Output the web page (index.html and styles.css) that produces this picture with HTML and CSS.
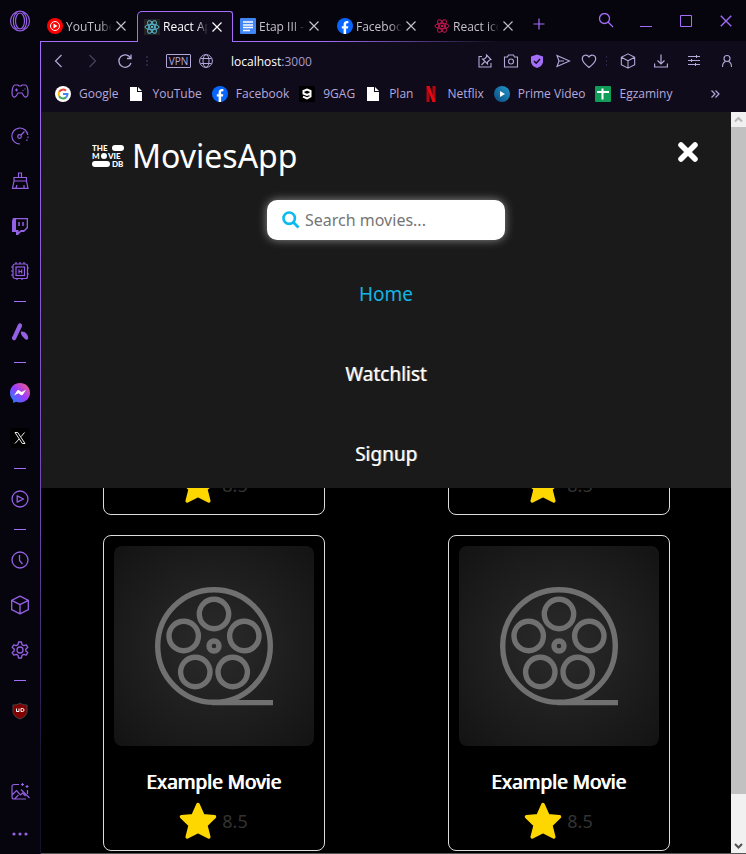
FILE: index.html
```html
<!DOCTYPE html>
<html lang="en">
<head>
<meta charset="utf-8">
<title>React App</title>
<link rel="stylesheet" href="styles.css">
</head>
<body>
<svg class="defs" aria-hidden="true">
  <defs>
    <linearGradient id="msg" x1="0" y1="1" x2="1" y2="0"><stop offset="0" stop-color="#0a8cff"/><stop offset=".5" stop-color="#9b3cff"/><stop offset="1" stop-color="#ff6070"/></linearGradient>
    <linearGradient id="prime" x1="0" y1="1" x2="1" y2="0"><stop offset="0" stop-color="#0b4a80"/><stop offset="1" stop-color="#2298cc"/></linearGradient>
    <radialGradient id="poster" r=".7"><stop offset="0" stop-color="#2b2b2b"/><stop offset="1" stop-color="#131313"/></radialGradient>
    <symbol id="atom" viewBox="0 0 16 16"><g fill="none" stroke="currentColor"><ellipse cx="8" cy="8" rx="7" ry="2.7"/><ellipse cx="8" cy="8" rx="7" ry="2.7" transform="rotate(60 8 8)"/><ellipse cx="8" cy="8" rx="7" ry="2.7" transform="rotate(120 8 8)"/></g><circle cx="8" cy="8" r="1.3" fill="currentColor"/></symbol>
    <symbol id="close" viewBox="0 0 12 12"><path d="M1.500 1.500l9 9M10.500 1.500l-9 9" fill="none" stroke="currentColor" stroke-width="1.2"/></symbol>
    <symbol id="facebook" viewBox="0 0 16 16"><circle cx="8" cy="8" r="8" fill="#0866ff"/><path d="M6.600 16V10.600H4.800V8.200h1.800V6.800c0-2.600 1.300-3.700 3.400-3.700.6 0 1 .05 1.400.15v2.100h-1c-1 0-1.300.5-1.300 1.400v1.450h2.200l-.4 2.400H9.100V16z" fill="#fff"/></symbol>
    <symbol id="file" viewBox="0 0 16 16"><path d="M2 1h7v5h5v9H2z" fill="#fff"/><path d="M10 1l4 4h-4z" fill="#fff"/></symbol>
    <symbol id="cube" viewBox="0 0 18 18"><path d="M9 1l7.500 3.800v8.400L9 17l-7.500-3.800V4.800zM1.500 4.800L9 8.700l7.500-3.900M9 8.700V17" fill="none" stroke="currentColor" stroke-linejoin="round" stroke-width="1.200"/></symbol>
    <symbol id="star" viewBox="0 0 38 38"><path d="M19 2.500l5 11.200 11.500 1.100-8.700 8.400 3 11.800L19 29.400 8.200 35l3-11.800-8.700-8.400L14 13.700z" fill="#ffd700" stroke="#ffd700" stroke-width="3.500" stroke-linejoin="round"/></symbol>
    <symbol id="reel" viewBox="0 0 200 200"><rect width="200" height="200" fill="url(#poster)"/><g fill="none" stroke="#707070" stroke-width="5.400"><circle cx="100" cy="100" r="56.300"/><circle cx="100" cy="68" r="14.700"/><circle cx="69.700" cy="90" r="14.700"/><circle cx="130.300" cy="90" r="14.700"/><circle cx="81.300" cy="126" r="14.700"/><circle cx="118.700" cy="126" r="14.700"/><circle cx="100" cy="100" r="5"/><path d="M98 156.600h61"/></g></symbol>
  </defs>
</svg>
<div class="window">
  <aside class="sidebar">
    <button class="side-item side-logo" aria-label="Opera"><svg width="22" height="22" viewBox="0 0 22 22" fill="none" stroke="currentColor" stroke-width="1.200"><ellipse cx="11" cy="11" rx="9.500" ry="9.800"/><ellipse cx="11" cy="11" rx="4.500" ry="8"/><path d="M8.500 2.500C3 5 3 17 8.500 19.500M13.500 2.500c5.500 2.500 5.500 14.500 0 17"/></svg></button>
    <button class="side-item" aria-label="GX Corner"><svg width="20" height="20" viewBox="0 0 20 20" fill="none" stroke="currentColor" stroke-width="1.200"><path d="M5 4h3l1 1h2l1-1h3c2 0 3 4 3 8.500 0 4-3 4.500-4.500 2L12 12H8l-1.500 2.500C5 17 2 16.500 2 12.500 2 8 3 4 5 4z"/><path d="M5 9h3M6.500 7.500v3M12.500 9.500h1M14.500 8h1"/></svg></button>
    <button class="side-item" aria-label="GX Control"><svg width="20" height="20" viewBox="0 0 20 20" fill="none" stroke="currentColor" stroke-width="1.200"><path d="M10 18a8 8 0 1 1 7.800-9"/><path d="M18 10.500a8 8 0 0 1-1.500 4.300" stroke-dasharray="1.500 1.500"/><circle cx="9.500" cy="10.500" r="1.800"/><path d="M11 9l3.500-3.500"/></svg></button>
    <button class="side-item" aria-label="GX Cleaner"><svg width="20" height="20" viewBox="0 0 20 20" fill="none" stroke="currentColor" stroke-width="1.200"><path d="M8.500 6V2h3v4M4 10V6.500h12.500V10M4 10h12.500l1.500 7.300H2.500zM6 17l1-3M14 17v-3"/></svg></button>
    <button class="side-item" aria-label="Twitch"><svg width="20" height="20" viewBox="0 0 20 20"><path d="M3 2h15v10l-4 4h-3l-3 3H6v-3H2V5z" fill="currentColor"/><path d="M6 3.300h10.700v8L14 14h-3l-2.500 2v-2H6z" fill="#08050f"/><path d="M9 6v4M13 6v4" stroke="currentColor" stroke-width="1.500"/></svg></button>
    <button class="side-item" aria-label="Hardware"><svg width="20" height="20" viewBox="0 0 20 20" fill="none" stroke="currentColor" stroke-width="1.200"><rect x="3" y="3" width="14.500" height="14.500" rx="2"/><rect x="6" y="6" width="8.500" height="8.500"/><path d="M6 1v2M10 1v2M14 1v2M7 17v2M12 17v2M1 6h2M1 10h2M1 14h2M17 7h2M17 13h2M9 8.500v4M11.700 8.500v4M9 10.500h2.500"/></svg></button>
    <hr class="side-rule">
    <button class="side-item" aria-label="Aria"><svg width="20" height="20" viewBox="0 0 20 20" fill="currentColor"><path d="M8 2.500C9 .8 11.500 1 12 3c.3 1-.2 2-1 3.500L6 17c-1 2-3.500 1.500-4-.5-.2-1 .3-2 1-3z"/><path d="M11 9.500c4.500-.5 7.200 3.500 7.200 6.500 0 2.500-2.700 2-4.200 0-1.500-2-3.500-3-3-6.500z"/></svg></button>
    <hr class="side-rule">
    <button class="side-item" aria-label="Messenger"><svg width="20" height="20" viewBox="0 0 20 20"><path d="M10 0C4.300 0 0 4.200 0 9.700c0 3 1.200 5.500 3 7.300L3.300 20 6 18.800c1.300.4 2.500.6 4 .6 5.700 0 10-4.200 10-9.700S15.700 0 10 0z" fill="url(#msg)"/><path d="M4 12.500l3-4.700c.5-.8 1.500-1 2.300-.4l2.300 1.700L16 6.800l-3 4.700c-.5.8-1.500 1-2.300.4L8.400 10.200z" fill="#fff"/></svg></button>
    <button class="side-item" aria-label="X"><svg width="20" height="20" viewBox="0 0 20 20" fill="none" stroke="#eee"><rect width="20" height="20" rx="4" fill="#000" stroke="none"/><path d="M5 4.500h2.700l7.300 11h-2.700zM14.500 4.500L11 8.700M9 11l-4 4.500"/></svg></button>
    <hr class="side-rule">
    <button class="side-item" aria-label="Player"><svg width="20" height="20" viewBox="0 0 20 20" fill="none" stroke="currentColor" stroke-width="1.300"><circle cx="10" cy="10" r="8"/><path d="M7.200 6.800v6.400l6.300-3.200z" stroke-linejoin="round"/></svg></button>
    <hr class="side-rule">
    <button class="side-item" aria-label="History"><svg width="20" height="20" viewBox="0 0 20 20" fill="none" stroke="currentColor" stroke-width="1.300"><circle cx="10" cy="10" r="8"/><path d="M9.500 5v5.500l3 3.500"/></svg></button>
    <button class="side-item" aria-label="Extensions"><svg width="20" height="20"><use href="#cube"/></svg></button>
    <button class="side-item" aria-label="Settings"><svg width="20" height="20" viewBox="0 0 20 20" fill="none" stroke="currentColor" stroke-width="1.300" stroke-linejoin="round"><circle cx="10" cy="10" r="3"/><path d="M8.500 2h3l.5 2.600 1.700 1L16.200 4.800l1.600 2.600-2 1.700v1.800l2 1.700-1.600 2.600-2.500-.8-1.700 1-.5 2.600h-3L8 15.400l-1.700-1-2.500.8-1.600-2.600 2-1.700V9.100l-2-1.700 1.600-2.600 2.500.8 1.700-1z"/></svg></button>
    <hr class="side-rule">
    <button class="side-item" aria-label="uBlock"><svg width="16" height="18" viewBox="0 0 16 18"><path d="M8 1c2 1.500 4 2 7 2v6c0 4-3 6.500-7 8-4-1.500-7-4-7-8V3c3 0 5-.5 7-2z" fill="#800000" stroke="#444"/><path d="M4.500 6.500v3h2.500v-3M9 6.500v3h1.500a1.500 1.500 0 0 0 0-3H9" fill="none" stroke="#fff"/></svg></button>
    <button class="side-item side-bottom" aria-label="Wallpaper"><svg width="20" height="20" viewBox="0 0 20 20" fill="none" stroke="currentColor" stroke-width="1.200"><path d="M9 2.500H4a2 2 0 0 0-2 2V15a2 2 0 0 0 2 2h12M17.500 8v4M2 13l4.500-4.500 4 4.500 2-2 3 3M11 7.500l8.500 8.500M12.500 1v3M11 2.500h3M17 3v3M15.500 4.500h3M4.500 17l4-4"/></svg></button>
    <button class="side-item side-more" aria-label="More"><svg width="20" height="20" viewBox="0 0 20 20" fill="currentColor"><circle cx="4" cy="10" r="1.600"/><circle cx="10" cy="10" r="1.600"/><circle cx="16" cy="10" r="1.600"/></svg></button>
  </aside>

  <div class="main">
    <header class="tabbar">
      <div class="tab"><svg class="fav" viewBox="0 0 16 16"><circle cx="8" cy="8" r="8" fill="#f00"/><circle cx="8" cy="8" r="4.500" fill="none" stroke="#fff"/><path d="M6.500 5.500v5l4-2.500z" fill="#fff"/></svg><span class="tab-title">YouTube</span><button class="tab-close" aria-label="Close tab"><svg width="12" height="12"><use href="#close"/></svg></button></div>
      <div class="tab active"><svg class="fav dark" viewBox="0 0 16 16"><use href="#atom"/></svg><span class="tab-title">React App</span><button class="tab-close" aria-label="Close tab"><svg width="12" height="12"><use href="#close"/></svg></button></div>
      <div class="tab"><svg class="fav" viewBox="0 0 16 16"><rect width="16" height="16" rx="1" fill="#4285f4"/><path d="M3 4h10M3 7h10M3 9.500h10M3 12.500h7" stroke="#fff" stroke-width="1.400"/></svg><span class="tab-title">Etap III -</span><button class="tab-close" aria-label="Close tab"><svg width="12" height="12"><use href="#close"/></svg></button></div>
      <div class="tab"><svg class="fav"><use href="#facebook"/></svg><span class="tab-title">Facebook</span><button class="tab-close" aria-label="Close tab"><svg width="12" height="12"><use href="#close"/></svg></button></div>
      <div class="tab"><svg class="fav pink"><use href="#atom"/></svg><span class="tab-title">React icons</span><button class="tab-close" aria-label="Close tab"><svg width="12" height="12"><use href="#close"/></svg></button></div>
      <button class="new-tab" aria-label="New tab"><svg width="12" height="12" viewBox="0 0 12 12" stroke="currentColor"><path d="M6 .5v11M.5 6h11" stroke-width="1.200"/></svg></button>
      <div class="controls">
        <button aria-label="Search tabs"><svg width="16" height="16" viewBox="0 0 16 16" fill="none" stroke="currentColor" stroke-width="1.300"><circle cx="6.500" cy="5.500" r="5"/><path d="M10 9l5 5"/></svg></button>
        <button aria-label="Minimize"><svg width="14" height="14" viewBox="0 0 14 14" stroke="currentColor"><path d="M1 12.500h12"/></svg></button>
        <button aria-label="Maximize"><svg width="14" height="14" viewBox="0 0 14 14" fill="none" stroke="currentColor"><path d="M1.500 1.500h11v11h-11z"/></svg></button>
        <button aria-label="Close window"><svg width="14" height="14"><use href="#close"/></svg></button>
      </div>
    </header>

    <div class="panel">
      <div class="toolbar">
        <button class="tool wide" aria-label="Back"><svg width="16" height="16" viewBox="0 0 16 16" fill="none" stroke="currentColor" stroke-width="1.200"><path d="M10.500 2L4.500 8l6 6"/></svg></button>
        <button class="tool wide faded" aria-label="Forward"><svg width="16" height="16" viewBox="0 0 16 16" fill="none" stroke="currentColor" stroke-width="1.200"><path d="M5.500 2l6 6-6 6"/></svg></button>
        <button class="tool wide" aria-label="Reload"><svg width="16" height="16" viewBox="0 0 16 16" fill="none" stroke="currentColor" stroke-width="1.300"><path d="M14 10A6.200 6.200 0 1 1 13.500 5M14 1.500V5.500h-4"/></svg></button>
        <span class="grip nav-grip"></span>
        <button class="vpn">VPN</button>
        <svg class="globe" width="14" height="14" viewBox="0 0 14 14" fill="none" stroke="currentColor"><circle cx="7" cy="7" r="6.400"/><ellipse cx="7" cy="7" rx="3" ry="6.400"/><path d="M1.500 4.500h11M1.500 9.500h11"/></svg>
        <div class="url"><span class="host">localhost</span>:3000</div>
        <button class="tool" aria-label="Pin"><svg width="16" height="16" viewBox="0 0 16 16" fill="none" stroke="currentColor" stroke-width="1.100"><path d="M5 3.500H2v10.500h12v-4M9.500 2l4.500 4.500-1.500.5-2 2 0 2-5-5h2l2-2zM7.800 8.500L4.500 12"/></svg></button>
        <button class="tool" aria-label="Snapshot"><svg width="16" height="16" viewBox="0 0 16 16" fill="none" stroke="currentColor" stroke-width="1.100"><path d="M1.500 4h3l1-2h5l1 2h3v10h-13z"/><circle cx="8" cy="8.500" r="2.500"/></svg></button>
        <button class="tool shield" aria-label="Ad blocker"><svg width="16" height="16" viewBox="0 0 16 16"><path d="M8 1.500l6 2v5c0 3.500-3 5.500-6 6.500-3-1-6-3-6-6.500v-5z" fill="currentColor"/><path d="M5 8l2.200 2.200L11 6" fill="none" stroke="#0f0b1a" stroke-width="1.500"/></svg></button>
        <button class="tool" aria-label="Send"><svg width="16" height="16" viewBox="0 0 16 16" fill="none" stroke="currentColor" stroke-width="1.100"><path d="M2 2.500L14.500 8 2 13.500 4 8zM4 8h5"/></svg></button>
        <button class="tool" aria-label="Save"><svg width="16" height="16" viewBox="0 0 16 16" fill="none" stroke="currentColor" stroke-width="1.200"><path d="M8 14.500C3 10.500 1.300 8.500 1.300 5.700 1.300 2 6 .7 8 4c2-3.300 6.700-2 6.700 1.700 0 2.800-1.700 4.800-6.700 8.800z"/></svg></button>
        <span class="grip"></span>
        <button class="tool wide" aria-label="Extensions"><svg width="16" height="16"><use href="#cube"/></svg></button>
        <button class="tool wide" aria-label="Downloads"><svg width="16" height="16" viewBox="0 0 16 16" fill="none" stroke="currentColor" stroke-width="1.200"><path d="M8 1.500V11M4.500 7.500L8 11l3.500-3.500M1.600 10.500V14h12.800v-3.500"/></svg></button>
        <button class="tool wide" aria-label="Easy setup"><svg width="16" height="16" viewBox="0 0 16 16" fill="none" stroke="currentColor"><path d="M2 3.500h12M2 7.500h12M2 11.500h12M10.500 2v3M5.500 6v3M9.500 10v3"/></svg></button>
        <button class="tool wide" aria-label="Profile"><svg width="16" height="16" viewBox="0 0 16 16" fill="none" stroke="currentColor" stroke-width="1.100"><circle cx="8" cy="5.500" r="3"/><path d="M3.500 14c0-3.500 1.500-5 3-5.500M12.500 14c0-3.500-1.500-5-3-5.500"/></svg></button>
      </div>
      <nav class="bookmarks" aria-label="Bookmarks">
        <a href="#"><svg class="fav" viewBox="0 0 16 16"><circle cx="8" cy="8" r="8" fill="#fff"/><g fill="none" stroke-width="2"><path d="M11 4.700A4.500 4.500 0 0 0 4.200 5.800" stroke="#ea4335"/><path d="M4.200 5.800a4.500 4.500 0 0 0 0 4.400" stroke="#fbbc05"/><path d="M4.200 10.200a4.500 4.500 0 0 0 6.800 1.200" stroke="#34a853"/><path d="M11 11.400A4.500 4.500 0 0 0 12.500 8H8" stroke="#4285f4"/></g></svg>Google</a>
        <a href="#"><svg class="fav"><use href="#file"/></svg>YouTube</a>
        <a href="#"><svg class="fav"><use href="#facebook"/></svg>Facebook</a>
        <a href="#"><svg class="fav" viewBox="0 0 16 16"><rect width="16" height="16" rx="1" fill="#000"/><path d="M11.500 7.500L8 9 4.500 7.500V5L8 3.500 11.500 5v5.500L8 12.500l-4-1.800" fill="none" stroke="#fff" stroke-width="2"/></svg>9GAG</a>
        <a href="#"><svg class="fav"><use href="#file"/></svg>Plan</a>
        <a href="#"><svg class="fav" viewBox="0 0 16 16"><path d="M3.500 0h3v16h-3zM9.500 0h3v16h-3z" fill="#b1060f"/><path d="M3.500 0h3l6 16h-3z" fill="#e50914"/></svg>Netflix</a>
        <a href="#"><svg class="fav" viewBox="0 0 16 16"><circle cx="8" cy="8" r="8" fill="url(#prime)"/><path d="M6 5v6l5-3z" fill="#fff"/></svg>Prime Video</a>
        <a href="#"><svg class="fav" viewBox="0 0 16 16"><rect width="16" height="16" rx="1" fill="#0f9d58"/><path d="M2 6h12M7.500 2.500v11" stroke="#fff" stroke-width="2"/></svg>Egzaminy</a>
        <button class="more" aria-label="More bookmarks"><svg width="10" height="10" viewBox="0 0 10 10" fill="none" stroke="currentColor" stroke-width="1.200"><path d="M1.500 1.500L5 5 1.500 8.500M5.500 1.500L9 5 5.500 8.500"/></svg></button>
      </nav>

      <div class="viewport">
        <div class="page">
          <div class="menu">
            <div class="menu-head">
              <div class="brand">
                <svg class="logo" width="33" height="24" viewBox="0 0 33 24" fill="#fff"><text x="0" y="7">THE</text><rect x="20" y="1" width="12" height="6" rx="3"/><text x="0" y="15">M</text><circle cx="12" cy="12" r="3"/><text x="16" y="15">VIE</text><rect x="0" y="17" width="18" height="6" rx="3"/><text x="20" y="23">DB</text></svg>
                <h1>MoviesApp</h1>
              </div>
              <button class="menu-close" aria-label="Close menu"><svg width="22" height="22" viewBox="0 0 22 22"><path d="M4 4l14 14M18 4L4 18" stroke="#fff" stroke-width="5.500" stroke-linecap="round"/></svg></button>
            </div>
            <label class="search">
              <svg width="18" height="18" viewBox="0 0 18 18" fill="none" stroke="#0dbbee"><circle cx="7.200" cy="7.200" r="5.700" stroke-width="2.600"/><path d="M11.500 11.500l5 5" stroke-width="2.800"/></svg>
              <input type="search" placeholder="Search movies..." aria-label="Search movies">
            </label>
            <nav class="links">
              <a class="current" href="#">Home</a>
              <a href="#">Watchlist</a>
              <a href="#">Signup</a>
            </nav>
          </div>
          <main class="movies">
            <article class="card"><svg class="poster"><use href="#reel"/></svg><h2>Example Movie</h2><p class="rating"><svg width="38" height="38"><use href="#star"/></svg>8.5</p></article>
            <article class="card"><svg class="poster"><use href="#reel"/></svg><h2>Example Movie</h2><p class="rating"><svg width="38" height="38"><use href="#star"/></svg>8.5</p></article>
            <article class="card"><svg class="poster"><use href="#reel"/></svg><h2>Example Movie</h2><p class="rating"><svg width="38" height="38"><use href="#star"/></svg>8.5</p></article>
            <article class="card"><svg class="poster"><use href="#reel"/></svg><h2>Example Movie</h2><p class="rating"><svg width="38" height="38"><use href="#star"/></svg>8.5</p></article>
          </main>
        </div>
        <div class="scrollbar" aria-hidden="true">
          <svg class="up" width="15" height="15" viewBox="0 0 15 15" fill="none" stroke="currentColor" stroke-width="2"><path d="M4 9.500L7.500 6 11 9.500"/></svg>
          <div class="thumb"></div>
          <svg class="down" width="15" height="15" viewBox="0 0 15 15" fill="none" stroke="currentColor" stroke-width="2"><path d="M4 6l3.500 3.500L11 6"/></svg>
        </div>
      </div>
    </div>
  </div>
</div>
</body>
</html>
```
FILE: styles.css
```css
* { box-sizing: border-box; }

:root {
  --accent: #a46dfa;
  --chrome: #06040d;
  --panel: #0f0b1a;
  --muted: #b3a8d8;
}

body {
  margin: 0;
  background: #000;
  font-family: "Open Sans", "Noto Sans", sans-serif;
}

button {
  display: flex;
  align-items: center;
  justify-content: center;
  padding: 0;
  border: 0;
  background: none;
  color: inherit;
  font: inherit;
}

a { color: inherit; text-decoration: none; }
svg { display: block; flex: none; }
.defs { position: absolute; width: 0; height: 0; }

.window {
  display: flex;
  height: 100vh;
  overflow: hidden;
  background: var(--chrome);
  font-size: 12px;
}

/* Sidebar */
.sidebar {
  display: flex;
  flex-direction: column;
  flex: none;
  width: 40px;
  color: #9460e4;
}
.side-item { flex: none; height: 45px; }
.side-logo { height: 41px; margin-bottom: 27px; }
.side-rule {
  flex: none;
  width: 12px;
  height: 1px;
  margin: 8px auto 7px;
  border: 0;
  background: var(--accent);
}
.side-bottom { margin-top: auto; }
.side-more { height: 40px; }

/* Tabs */
.main {
  display: flex;
  flex-direction: column;
  flex: 1;
  min-width: 0;
}
.tabbar {
  display: flex;
  flex: none;
  height: 41px;
  padding-top: 11px;
  color: #c4c0cc;
}
.tab {
  display: flex;
  align-items: center;
  gap: 3px;
  flex: none;
  width: 97px;
  padding: 0 10px 0 7px;
}
.tab.active {
  z-index: 1;
  width: 96px;
  height: 31px;
  margin: 0 0 -1px 0;
  padding: 0 9px 1px 6px;
  border: 1px solid var(--accent);
  border-bottom: 0;
  border-radius: 5px 3px 0 0;
  background: var(--panel);
  color: #fff;
}
.tab-title {
  flex: 1;
  overflow: hidden;
  white-space: nowrap;
  -webkit-mask-image: linear-gradient(90deg, #000 75%, transparent);
  mask-image: linear-gradient(90deg, #000 75%, transparent);
}
.fav { width: 16px; height: 16px; }
.fav.dark { background: #222; color: #58b8d0; }
.fav.pink { color: #c2184f; }
.new-tab { width: 24px; height: 26px; margin-left: 3px; color: var(--accent); }
.controls {
  display: flex;
  margin: -11px 0 0 auto;
  color: var(--accent);
}
.controls button { width: 40px; height: 41px; }

/* Toolbar */
.panel {
  display: flex;
  flex-direction: column;
  flex: 1;
  min-height: 0;
  padding: 0 0 0 1px;
  background:
    linear-gradient(90deg, var(--accent) 40%, transparent 65%) 0 0 / 100% 1px no-repeat,
    linear-gradient(180deg, var(--accent), #6d46ac 60%, #16102a 90%) 0 0 / 1px 100% no-repeat,
    var(--panel);
}
.toolbar {
  display: flex;
  align-items: center;
  flex: none;
  height: 40px;
  padding: 0 3px 0 1px;
  color: var(--muted);
}
.tool { width: 26px; height: 32px; }
.tool.wide { width: 33px; }
.faded { opacity: .35; }
.shield { color: var(--accent); }
.grip { width: 9px; height: 12px; background: radial-gradient(circle, #2b2545 1px, transparent 1px) 0 0 / 9px 4px; }
.nav-grip { width: 12px; background-size: 12px 4px; }
.vpn {
  width: 25px;
  height: 14px;
  margin-left: 13px;
  border: 1px solid currentColor;
  border-radius: 1px;
  font-size: 10px;
}
.globe { margin: 0 18px 0 8px; }
.url { flex: 1; color: #a79bc8; }
.host { color: #fff; }

.bookmarks {
  display: flex;
  align-items: center;
  gap: 10px;
  flex: none;
  height: 31px;
  padding: 0 26px 6px 14px;
  color: #b6a9dd;
  white-space: nowrap;
}
.bookmarks a { display: flex; align-items: center; gap: 8px; }
.more { margin-left: auto; }

/* Page */
.viewport {
  display: flex;
  flex: 1;
  min-height: 0;
  border-bottom: 1px solid #555;
  background: #000;
  font-family: "Noto Sans", sans-serif;
}
.page {
  position: relative;
  flex: 1;
  overflow: hidden;
  color: #fff;
}
.menu {
  position: absolute;
  inset: 0 0 auto;
  display: flex;
  flex-direction: column;
  align-items: center;
  background: #1a1a1a;
}
.menu-head {
  display: flex;
  align-items: center;
  justify-content: space-between;
  align-self: stretch;
  height: 80px;
  margin-bottom: 8px;
  padding: 0 32px 0 51px;
}
.brand { display: flex; align-items: center; gap: 7px; padding-top: 8px; }
.logo { font: 900 8px Lato, sans-serif; }
h1 { margin: 0; font-size: 32px; font-weight: 400; line-height: 44px; }

.search {
  display: flex;
  align-items: center;
  gap: 5px;
  width: 238px;
  height: 40px;
  padding: 0 15px;
  border-radius: 10px;
  background: #fff;
  box-shadow: 0 0 10px rgba(255, 255, 255, .5);
}
.search input {
  flex: 1;
  min-width: 0;
  padding: 0;
  border: 0;
  outline: 0;
  background: none;
  font: 16px "Noto Sans", sans-serif;
}
.search input::placeholder { color: #757575; }

.links {
  display: flex;
  flex-direction: column;
  align-items: center;
  gap: 52px;
  padding: 40px 0 20px;
  font-size: 19px;
  line-height: 28px;
  text-shadow: 1px 0 rgba(255, 255, 255, .5);
}
.links .current { color: #14b4e4; text-shadow: none; }

.movies {
  display: grid;
  grid-template-columns: 1fr 1fr;
  justify-items: center;
  gap: 20px 0;
  padding-top: 87px;
}
.card {
  display: flex;
  flex-direction: column;
  align-items: center;
  padding: 10px;
  border: 1px solid #ddd;
  border-radius: 8px;
}
.poster { width: 200px; height: 200px; border-radius: 8px; }
h2 {
  margin: 22px 0 5px;
  font-size: 19px;
  font-weight: 400;
  line-height: 28px;
  text-shadow: 1px 0 currentColor;
}
.rating {
  display: flex;
  align-items: center;
  gap: 5px;
  height: 39px;
  margin: 0;
  color: #333;
  font-size: 18px;
}

.scrollbar {
  display: flex;
  flex-direction: column;
  flex: none;
  width: 15px;
  background: #f1f1f1;
}
.thumb { flex: 0 1 90%; background: #c1c1c1; }
.up { color: #b8b8b8; }
.down { margin-top: auto; color: #505050; }
```
